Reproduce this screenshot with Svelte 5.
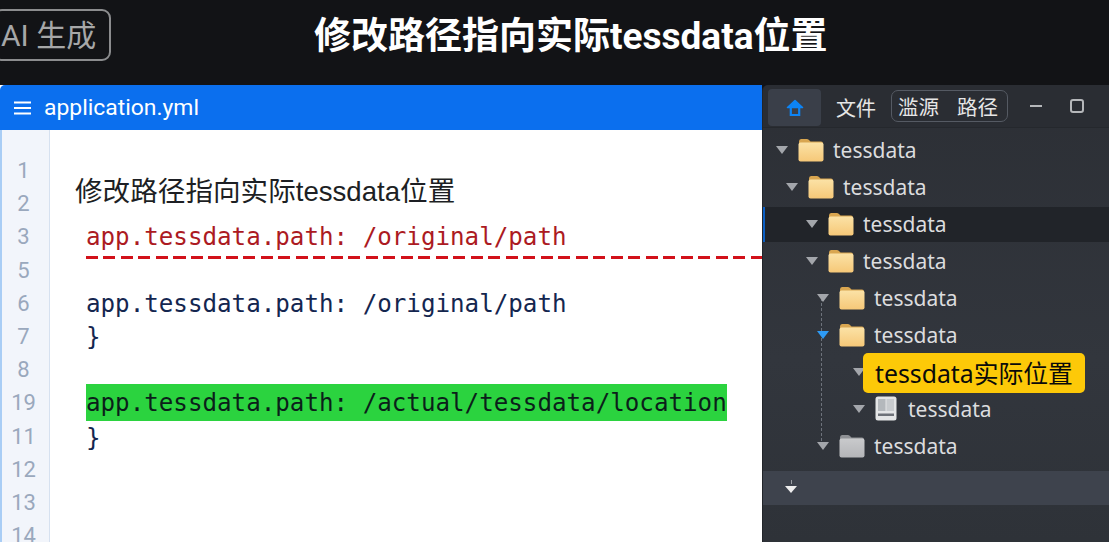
<script>
  const lineNumbers = [1, 2, 3, 5, 6, 7, 8, 19, 11, 12, 13, 14];
  const tree = [
    { indent: 13, kind: 'folder' },
    { indent: 23, kind: 'folder' },
    { indent: 43, kind: 'folder', selected: true },
    { indent: 43, kind: 'folder' },
    { indent: 54, kind: 'folder' },
    { indent: 54, kind: 'folder', active: true },
    { indent: 90, kind: 'badge' },
    { indent: 90, kind: 'drive' },
    { indent: 54, kind: 'gray' }
  ];
</script>

<div class="page">
  <header class="top">
    <div class="tag">AI 生成</div>
    <h1>修改路径指向实际tessdata位置</h1>
  </header>
  <main class="work">
    <section class="editor">
      <div class="titlebar">
        <svg class="menu" width="17" height="14" viewBox="0 0 17 14"><path d="M0 1.5h17M0 7h17M0 12.500h17" stroke="#fff" stroke-width="2.2" /></svg>
        <span>application.yml</span>
      </div>
      <div class="body">
        <div class="gutter">
          {#each lineNumbers as n}<div class="num">{n}</div>{/each}
        </div>
        <div class="code">
          <div class="heading">修改路径指向实际tessdata位置</div>
          <div class="line red">app.tessdata.path: /original/path</div>
          <div class="dash"></div>
          <div class="line navy gap1">app.tessdata.path: /original/path</div>
          <div class="line navy">&#125;</div>
          <div class="line green">app.tessdata.path: /actual/tessdata/location</div>
          <div class="line navy after">&#125;</div>
        </div>
      </div>
    </section>
    <aside class="panel">
      <div class="toolbar">
        <button class="home" aria-label="首页">
          <svg width="18" height="18" viewBox="0 0 18 18" fill="none"><path d="M9 1.500 16.500 8.500H1.500Z" fill="#0d84f5" stroke="#0d84f5" stroke-width="1.600" stroke-linejoin="round"/><path d="M4.800 8.500V16h8.400V8.500" stroke="#0d84f5" stroke-width="2.200"/></svg>
        </button>
        <span class="file">文件</span>
        <div class="seg"><span>滥源</span><span>路径</span></div>
        <span class="min"></span>
        <span class="max"></span>
      </div>
      <div class="tree">
        <div class="guide"></div>
        {#each tree as row}
          <div class="row" class:selected={row.selected} style="padding-left:{row.indent}px">
            <span class="arrow" class:blue={row.active}></span>
            {#if row.kind === 'badge'}
              <span class="badge">tessdata实际位置</span>
            {:else}
              {#if row.kind === 'drive'}
                <svg class="icon drive" width="22" height="25" viewBox="0 0 22 25"><rect x="0.5" y="0.5" width="21" height="24" rx="2.5" fill="#e4e5e6"/><rect x="3" y="3" width="7.500" height="12" fill="#b4b8bc"/><rect x="11.500" y="3" width="7.500" height="12" fill="#c8cbce"/><rect x="3" y="17.500" width="16" height="2.500" fill="#6d7178"/></svg>
              {:else}
                <svg class="icon" width="26" height="24" viewBox="0 0 26 24">
                  <defs>
                    <linearGradient id="fy" x1="0" y1="0" x2="0" y2="1"><stop offset="0" stop-color="#fbe2a6"/><stop offset="1" stop-color="#f6c878"/></linearGradient>
                    <linearGradient id="fg" x1="0" y1="0" x2="0" y2="1"><stop offset="0" stop-color="#c9cacc"/><stop offset="1" stop-color="#b4b5b8"/></linearGradient>
                  </defs>
                  <path d="M1 3.500Q1 1 3 1h6q1.500 0 2.500 1.500L12.500 3.500H23q2 0 2 2V8H1z" fill={row.kind === 'gray' ? '#8f9195' : '#d9a650'}/>
                  <rect x="0.500" y="4.500" width="25" height="19" rx="2" fill={row.kind === 'gray' ? 'url(#fg)' : 'url(#fy)'}/>
                </svg>
              {/if}
              <span class="name">tessdata</span>
            {/if}
          </div>
        {/each}
      </div>
      <div class="strip"><span class="tiny"></span></div>
    </aside>
  </main>
</div>

<style>
  :global(body) { margin: 0; background: #121316; }
  .page {
    width: 1109px; height: 542px; overflow: hidden; display: flex; flex-direction: column;
    font-family: Roboto, "Noto Sans CJK SC", sans-serif; background: #121316;
  }
  .top { height: 85px; flex: none; display: flex; align-items: flex-start; }
  .tag {
    box-sizing: border-box; width: 118px; height: 52px; margin: 9px 0 0 -7px; padding-left: 6px;
    border: 2px solid #8b8c8e; border-radius: 9px; color: #a6a7a8; font-size: 30px; line-height: 50px;
    white-space: nowrap;
  }
  h1 {
    margin: 13px 0 0 203px; color: #fff; font-size: 37px; line-height: 48px; font-weight: 700; white-space: nowrap;
    font-family: Roboto, "Noto Sans CJK SC", sans-serif;
  }
  .work { flex: 1; display: flex; min-height: 0; }
  .editor { flex: 1; min-width: 0; display: flex; flex-direction: column; background: #fff; }
  .titlebar {
    height: 45px; flex: none; display: flex; align-items: center; gap: 13px; padding-left: 14px;
    background: #0b6fee; border-radius: 5px 0 0 0; color: #fff; font-size: 22.900px;
  }
  .menu { flex: none; }
  .body { flex: 1; display: flex; min-height: 0; }
  .gutter {
    box-sizing: border-box; width: 50px; flex: none; padding-top: 24px; background: #f2f5fb;
    border-left: 2px solid #a9cdf5; border-right: 1.500px solid #d6e1f0;
  }
  .num { height: 33.200px; line-height: 33.200px; text-align: center; color: #9aa8bd; font-size: 22px; padding-right: 4px; }
  .code { flex: 1; min-width: 0; padding-left: 36px; }
  .heading {
    margin: 44px 0 0 -11px; height: 36px; line-height: 36px; color: #1d1f24; font-size: 27.600px; white-space: nowrap;
    font-family: "Liberation Sans", "Noto Sans CJK SC", sans-serif;
  }
  .line {
    height: 33.200px; line-height: 33.200px; font-family: "DejaVu Sans Mono", monospace; font-size: 24.200px;
    white-space: nowrap; width: max-content;
  }
  .red { margin-top: 11px; color: #ac1a22; }
  .navy { color: #14264f; }
  .dash {
    height: 3px; margin-top: 2px;
    background: repeating-linear-gradient(90deg, #d2111a 0 12px, transparent 12px 17.500px);
  }
  .gap1 { margin-top: 29px; }
  .green { margin-top: 29px; width: 641px; height: 37px; line-height: 38px; background: #2bd33f; color: #0b1f1a; }
  .after { margin-top: 1px; }
  .panel {
    width: 347px; flex: none; display: flex; flex-direction: column;
    background: linear-gradient(#2c2f35, #32363d 60%, #2e3238);
    border-left: 1px solid #22252a; box-sizing: border-box; border-radius: 6px 0 0 0;
  }
  .toolbar {
    height: 43px; flex: none; display: flex; align-items: center; border-bottom: 1px solid #25282d;
    background: #2a2d33; color: #e6e6e6; font-size: 20px; box-sizing: border-box; border-radius: 6px 0 0 0;
  }
  .home {
    width: 53px; height: 37px; margin: 3px 0 0 5px; padding: 0; border: 0; border-radius: 4px; background: #3a3f49;
    display: flex; align-items: center; justify-content: center;
  }
  .file { margin: 3px 0 0 15px; }
  .seg {
    box-sizing: border-box; width: 117px; height: 32px; margin: 0 0 0 15px; display: flex;
    gap: 18px; align-items: center; padding-left: 6px; border: 1px solid #555a63; border-radius: 7px; font-size: 20.500px;
  }
  .min { width: 12px; height: 2px; margin-left: 22px; background: #b5b7ba; }
  .max { box-sizing: border-box; width: 14px; height: 14px; margin-left: 28px; border: 2px solid #b5b7ba; border-radius: 3px; }
  .tree { position: relative; padding-top: 3px; flex: none; }
  .guide { position: absolute; left: 58px; top: 170px; height: 148px; border-left: 1.500px dashed #6e737c; }
  .row { height: 37px; display: flex; align-items: center; box-sizing: border-box; position: relative; }
  .selected {
    background:
      linear-gradient(#0b5fc4, #0b5fc4) left bottom / 2px 35px no-repeat,
      linear-gradient(#212429, #212429) left bottom / 100% 35px no-repeat;
  }
  .arrow {
    flex: none; width: 0; height: 0; border-left: 6.500px solid transparent; border-right: 6.500px solid transparent;
    border-top: 8px solid #a3a6ab; margin-right: 10px; position: relative;
  }
  .arrow.blue { border-top-color: #2e9bf5; }
  .icon { flex: none; margin-right: 9px; }
  .drive { margin-right: 11px; }
  .name { color: #dcdddf; font-family: "Noto Sans", sans-serif; font-size: 21px; }
  .badge {
    position: relative; margin: 2px 0 0 -12px; height: 40px; width: 222px; box-sizing: border-box; padding-left: 12px;
    background: #fdc908; border-radius: 5px; color: #0a0a0a; font-size: 24.800px; line-height: 40px; white-space: nowrap;
    font-family: "Noto Sans", "Noto Sans CJK SC", sans-serif;
  }
  .strip { margin-top: 7px; height: 34px; background: #3e434d; display: flex; align-items: center; padding-left: 22px; }
  .tiny { position: relative; width: 0; height: 0; border-left: 6px solid transparent; border-right: 6px solid transparent; border-top: 7px solid #eee; margin-top: 2px; }
  .tiny::before { content: ""; position: absolute; left: -0.5px; top: -13px; width: 1px; height: 4px; background: #9a9da3; }
</style>
